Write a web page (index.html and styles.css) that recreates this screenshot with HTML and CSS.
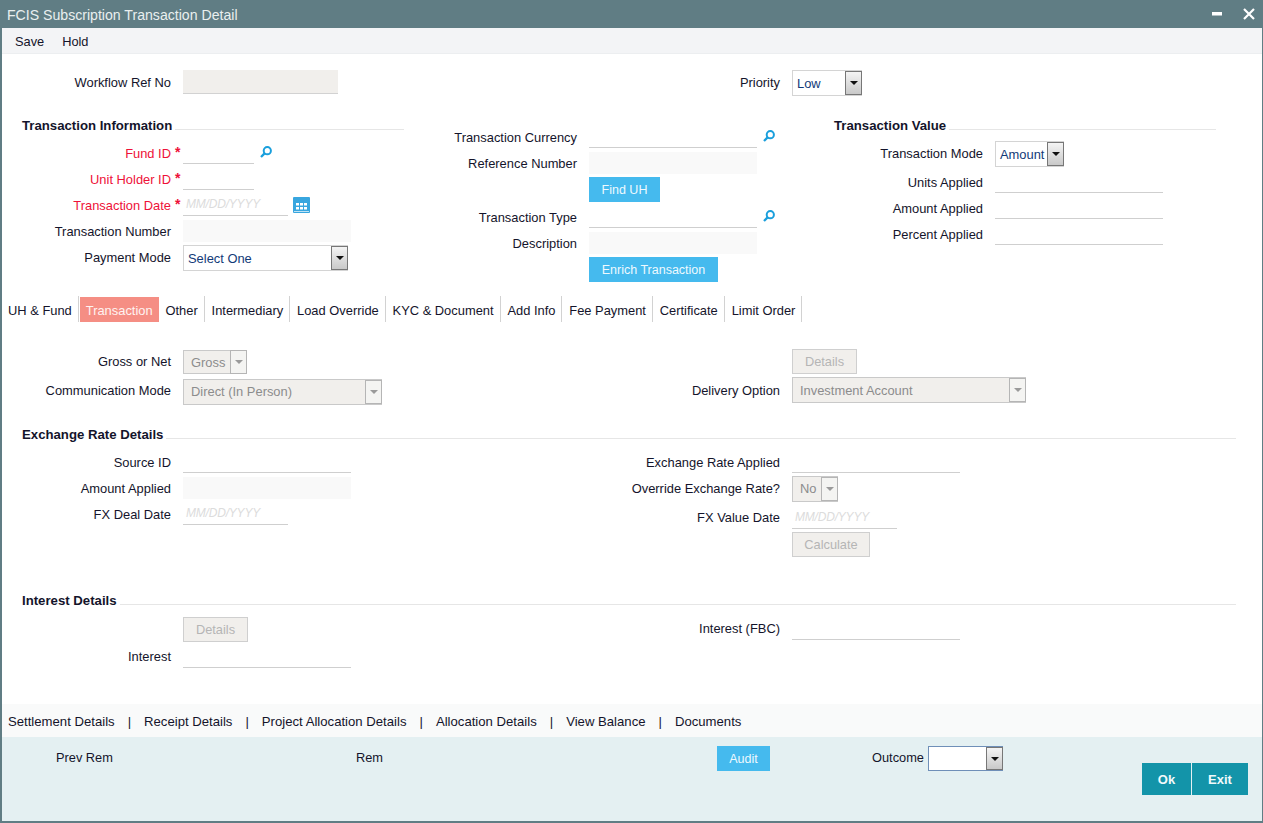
FILE: index.html
```html
<!DOCTYPE html>
<html lang="en">
<head>
<meta charset="utf-8">
<title>FCIS Subscription Transaction Detail</title>
<link rel="stylesheet" href="styles.css">
</head>
<body>
<svg class="defs" width="0" height="0">
  <symbol id="search" viewBox="0 0 12 12"><circle cx="7.3" cy="4.7" r="3.6" fill="none" stroke="#1a9fdc" stroke-width="2"/><path d="M4.6 7.4 1 11" stroke="#1a9fdc" stroke-width="2.3" fill="none"/></symbol>
  <symbol id="cal" viewBox="0 0 17 16"><rect width="17" height="16" rx="1" fill="#38a6df"/><path d="M3 6h3v2.500H3zM7 6h3v2.500H7zM11 6h3v2.500h-3zM3 10h3v2.500H3zM7 10h3v2.500H7zM11 10h3v2.500h-3z" fill="#fff"/><rect x="1" y="14" width="15" height="1" fill="#bfe3f5"/></symbol>
</svg>
<div class="window">
  <header class="titlebar">
    <span class="title">FCIS Subscription Transaction Detail</span>
    <span class="winctl">
      <svg width="10" height="4" viewBox="0 0 10 4"><rect width="10" height="3.5" fill="#fff"/></svg>
      <svg width="12" height="12" viewBox="0 0 12 12"><path d="M1 1l10 10M11 1 1 11" stroke="#fff" stroke-width="2.2" fill="none"/></svg>
    </span>
  </header>
  <nav class="toolbar"><span>Save</span><span>Hold</span></nav>

  <main class="main">
    <div class="toprow">
      <div class="row col-a">
        <label class="lbl">Workflow Ref No</label>
        <div class="field wf w155"></div>
      </div>
      <div class="row">
        <label class="lbl">Priority</label>
        <div class="select sel-priority"><span class="val">Low</span><span class="arrow"><i></i></span></div>
      </div>
    </div>

    <div class="three">
      <section class="c1">
        <div class="heading"><b>Transaction Information</b><span class="rule"></span></div>
        <div class="row"><label class="lbl req">Fund ID<span class="star">*</span></label><div class="field w71"></div><svg class="icon-s"><use href="#search"/></svg></div>
        <div class="row"><label class="lbl req">Unit Holder ID<span class="star">*</span></label><div class="field w71"></div></div>
        <div class="row"><label class="lbl req">Transaction Date<span class="star">*</span></label><div class="field w105 date">MM/DD/YYYY</div><svg class="icon-c"><use href="#cal"/></svg></div>
        <div class="row"><label class="lbl">Transaction Number</label><div class="field ro w168"></div></div>
        <div class="row"><label class="lbl">Payment Mode</label><div class="select sel-pay"><span class="val">Select One</span><span class="arrow"><i></i></span></div></div>
      </section>

      <section class="c2">
        <div class="row"><label class="lbl">Transaction Currency</label><div class="field w168"></div><svg class="icon-s"><use href="#search"/></svg></div>
        <div class="row"><label class="lbl">Reference Number</label><div class="field ro w168"></div></div>
        <div class="btnrow r-find"><button class="btn blue w71b">Find UH</button></div>
        <div class="row"><label class="lbl">Transaction Type</label><div class="field w168"></div><svg class="icon-s"><use href="#search"/></svg></div>
        <div class="row"><label class="lbl">Description</label><div class="field ro w168"></div></div>
        <div class="btnrow r-find"><button class="btn blue w129b">Enrich Transaction</button></div>
      </section>

      <section class="c3">
        <div class="heading"><b>Transaction Value</b><span class="rule"></span></div>
        <div class="row modeRow"><label class="lbl">Transaction Mode</label><div class="select sel-mode"><span class="val">Amount</span><span class="arrow"><i></i></span></div></div>
        <div class="row"><label class="lbl">Units Applied</label><div class="field w168"></div></div>
        <div class="row"><label class="lbl">Amount Applied</label><div class="field w168"></div></div>
        <div class="row"><label class="lbl">Percent Applied</label><div class="field w168"></div></div>
      </section>
    </div>

    <div class="tabs">
      <a class="tab first">UH &amp; Fund</a><a class="tab active">Transaction</a><a class="tab">Other</a><a class="tab">Intermediary</a><a class="tab">Load Override</a><a class="tab">KYC &amp; Document</a><a class="tab">Add Info</a><a class="tab">Fee Payment</a><a class="tab">Certificate</a><a class="tab">Limit Order</a>
    </div>

    <div class="two gross">
      <div>
        <div class="row r-gross"><label class="lbl">Gross or Net</label><div class="select dis sel-gross"><span class="val">Gross</span><span class="arrow"><i></i></span></div></div>
        <div class="row"><label class="lbl">Communication Mode</label><div class="select dis sel-comm"><span class="val">Direct (In Person)</span><span class="arrow"><i></i></span></div></div>
      </div>
      <div>
        <div class="btnrow r-details"><button class="btn off w65b">Details</button></div>
        <div class="row"><label class="lbl">Delivery Option</label><div class="select dis sel-deliv"><span class="val">Investment Account</span><span class="arrow"><i></i></span></div></div>
      </div>
    </div>

    <div class="heading wide"><b>Exchange Rate Details</b><span class="rule"></span></div>
    <div class="two ex-panel">
      <div>
        <div class="row"><label class="lbl">Source ID</label><div class="field w168"></div></div>
        <div class="row"><label class="lbl">Amount Applied</label><div class="field ro w168"></div></div>
        <div class="row"><label class="lbl">FX Deal Date</label><div class="field w105 date deal">MM/DD/YYYY</div></div>
      </div>
      <div>
        <div class="row"><label class="lbl">Exchange Rate Applied</label><div class="field w168"></div></div>
        <div class="row"><label class="lbl">Override Exchange Rate?</label><div class="select dis sel-no"><span class="val">No</span><span class="arrow"><i></i></span></div></div>
        <div class="row r-fxval"><label class="lbl">FX Value Date</label><div class="field w105 date low">MM/DD/YYYY</div></div>
        <div class="btnrow r-calc"><button class="btn off w78b">Calculate</button></div>
      </div>
    </div>

    <div class="heading wide"><b>Interest Details</b><span class="rule"></span></div>
    <div class="two">
      <div>
        <div class="btnrow r-idet"><button class="btn off w65b">Details</button></div>
        <div class="row"><label class="lbl">Interest</label><div class="field low w168"></div></div>
      </div>
      <div>
        <div class="row"><label class="lbl">Interest (FBC)</label><div class="field low w168"></div></div>
      </div>
    </div>
  </main>

  <div class="links">
    <a>Settlement Details</a><i>|</i><a>Receipt Details</a><i>|</i><a>Project Allocation Details</a><i>|</i><a>Allocation Details</a><i>|</i><a>View Balance</a><i>|</i><a>Documents</a>
  </div>

  <footer class="footer">
    <span class="f-prev">Prev Rem</span>
    <span class="f-rem">Rem</span>
    <span class="f-audit"><button class="btn blue audit">Audit</button></span>
    <span class="f-out">Outcome</span>
    <div class="select sel-out"><span class="val"></span><span class="arrow"><i></i></span></div>
    <div class="actions"><button class="act ok">Ok</button><button class="act exit">Exit</button></div>
  </footer>
</div>
</body>
</html>
```

FILE: styles.css
```css
* { box-sizing: border-box; }
html, body { margin: 0; padding: 0; height: 100%; }
body { font-family: "Liberation Sans", Arial, sans-serif; font-size: 12.9px; color: #14142b; background: #fff; overflow: hidden; }
.defs { position: absolute; }

.window { width: 1263px; height: 823px; display: flex; flex-direction: column; border-left: 2px solid #607d84; border-right: 1px solid #607d84; border-bottom: 2px solid #607d84; }

.titlebar { height: 28px; margin: 0 -1px 0 -2px; padding: 0 8px 0 7px; background: #607d84; color: #e9efef; font-size: 14.12px; display: flex; align-items: center; justify-content: space-between; flex: none; }
.title { position: relative; top: 1px; }
.winctl { display: flex; align-items: center; gap: 21px; }

.toolbar { height: 26px; flex: none; background: #f3f4f6; border-bottom: 1px solid #eceef0; padding-left: 13px; display: flex; gap: 18px; line-height: 28px; font-size: 12.8px; }

.main { flex: 1; min-height: 0; }

.toprow { display: flex; padding-top: 15px; height: 63px; }
.col-a { width: 609px; }

.row { display: flex; align-items: flex-start; height: 26px; }
.lbl { width: 181px; padding-right: 12px; flex: none; text-align: right; line-height: 28px; position: relative; white-space: nowrap; }
.req { color: #ee1138; }
.star { position: absolute; right: 0; top: -2px; width: 8px; text-align: left; font-size: 14px; font-weight: 700; color: #ee1138; }

.field { height: 23px; margin-top: 1px; border-bottom: 1px solid #cfcfcf; flex: none; }
.field.low { height: 24px; }
.field.ro { height: 22px; margin-top: 2px; background: #f9f9f9; border-bottom: 0; }
.field.wf { background: #f1efec; margin-top: 1px; height: 24px; border-bottom: 1px solid #d2d2d2; }
.date { font-style: italic; color: #dcdcdc; font-size: 12px; letter-spacing: -.2px; padding-left: 3px; line-height: 22px; }
.date.deal { line-height: 23px; }
.date.low { line-height: 25px; }
.w71 { width: 71px; } .w105 { width: 105px; } .w155 { width: 155px; } .w168 { width: 168px; }

.icon-s { width: 12px; height: 12px; margin: 6px 0 0 6px; flex: none; }
.icon-c { width: 17px; height: 16px; margin: 5px 0 0 5px; flex: none; }

.select { display: flex; height: 26px; border: 1px solid #d4d4d4; background: #fff; color: #123a78; flex: none; }
.select .val { flex: 1; padding-left: 4px; line-height: 25px; white-space: nowrap; overflow: hidden; }
.arrow { width: 17px; height: 24px; flex: none; margin: 0 -1px 0 0; border: 1px solid #777; background: linear-gradient(#f4f4f4, #c9c9c9); display: flex; align-items: center; justify-content: center; }
.arrow i { width: 0; height: 0; border: 4px solid transparent; border-top: 4px solid #111; border-bottom: 0; }
.select.dis { background: #f1efec; color: #8c8c8c; border-color: #c9c9c9; }
.select.dis .val { padding-left: 7px; }
.select.dis .arrow { background: #f4f4f2; border: 1px solid #b5b5b5; }
.select.dis .arrow i { border-top-color: #9a9a9a; }

.sel-priority { width: 70px; margin-top: 1px; }
.sel-pay { width: 165px; margin-top: 1px; }
.sel-mode { width: 69px; margin-top: 1px; }
.sel-gross { width: 64px; margin-top: 2px; height: 24px; }
.sel-gross .arrow { height: 24px; margin-top: -1px; }
.sel-gross .val, .sel-comm .val { line-height: 23px; }
.sel-comm { width: 199px; margin-top: 2px; }
.sel-deliv { width: 234px; }
.sel-no { width: 46px; margin-top: 1px; }
.sel-no .val { line-height: 24px; }

.three { display: grid; grid-template-columns: 406px 406px 1fr; height: 179px; }
.c2 { padding-top: 7px; }
.heading { display: flex; height: 23px; padding-left: 20px; line-height: 18px; }
.heading b { font-weight: 700; font-size: 13.2px; white-space: nowrap; }
.rule { flex: 1; height: 13px; border-bottom: 1px solid #e6e6e6; margin-left: 3px; }
.c1 .heading { margin-right: 4px; }
.c3 .heading { margin-right: 46px; }
.modeRow { height: 29px; }

.btnrow { height: 28px; padding-left: 181px; }
.r-find { padding-top: 1px; }
.btn { display: block; height: 25px; font: inherit; font-size: 12.5px; padding: 0; cursor: default; }
.btn.blue { background: #45baee; border: 0; color: #eef9fe; }
.btn.off { background: #f1efec; border: 1px solid #cfcfcf; color: #b5b5b5; font-size: 12.8px; padding-bottom: 1px; }
.w71b { width: 71px; } .w129b { width: 129px; } .w65b { width: 65px; } .w78b { width: 78px; }

.tabs { display: flex; height: 26px; }
.tab { padding: 0 6px 0 6.83px; line-height: 29px; border-right: 1px solid #d2d2d2; white-space: nowrap; height: 26px; }
.tab.first { padding: 0 6px; }
.tab.active { background: #f58e84; color: #fff3f1; padding: 0 6px; margin-left: 1px; border-right: 0; height: 25px; margin-top: 1px; line-height: 27px; }

.two { display: grid; grid-template-columns: 609px 1fr; }
.gross { height: 104px; padding-top: 26px; }
.r-gross { height: 29px; }
.r-details { height: 29px; padding-top: 1px; }
.wide { margin-right: 26px; }
.ex-panel { height: 143px; }
.r-fxval { margin-top: 3px; height: 27px; }
.r-calc { height: 26px; padding-top: 1px; }
.r-idet { height: 28px; padding-top: 2px; }

.links { height: 33px; flex: none; background: #f9fafa; display: flex; align-items: center; padding: 1px 0 0 6px; font-size: 13.15px; }
.links i { font-style: normal; margin: 0 13px; }

.footer { height: 84px; flex: none; background: #e4f0f2; display: flex; align-items: flex-start; padding-top: 9px; padding-left: 54px; font-size: 12.8px; }
.f-prev { width: 300px; line-height: 24px; }
.f-rem { width: 361px; line-height: 24px; }
.f-audit { width: 155px; }
.audit { width: 53px; }
.f-out { width: 56px; line-height: 24px; }
.sel-out { width: 75px; height: 25px; border-color: #6f8fb8; }
.sel-out .arrow { height: 23px; }
.actions { margin-left: auto; margin-right: 14px; margin-top: 17px; display: flex; gap: 1px; }
.act { height: 32px; background: #1394a9; color: #f2fafb; border: 0; font: inherit; font-weight: 700; font-size: 13px; padding: 0; }
.ok { width: 49px; }
.exit { width: 56px; }
```
